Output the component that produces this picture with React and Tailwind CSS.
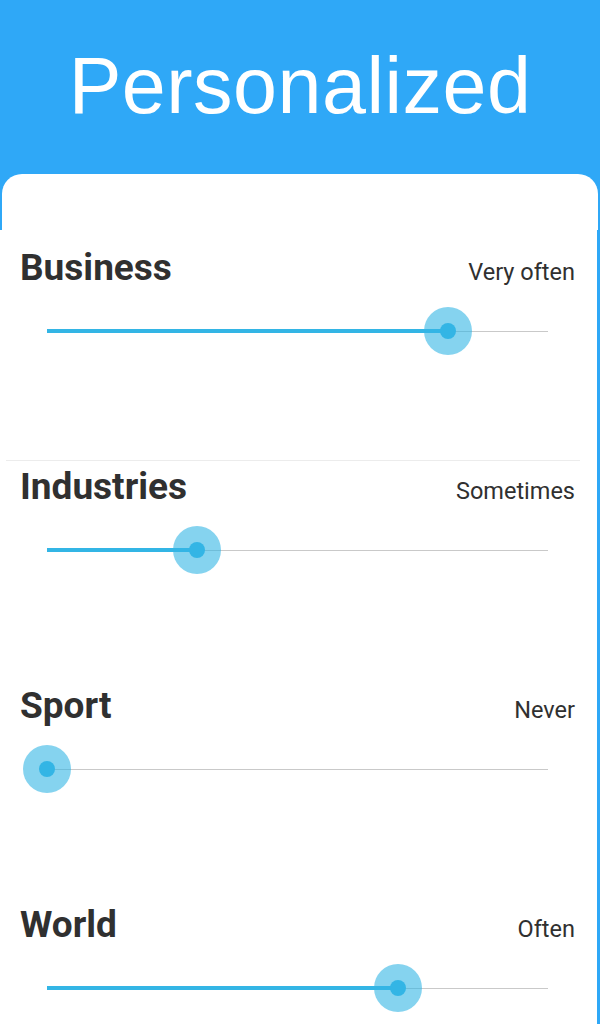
import React from "react";

const rows = [
  { label: "Business", value: "Very often", pct: 0.8, divider: false },
  { label: "Industries", value: "Sometimes", pct: 0.3, divider: true },
  { label: "Sport", value: "Never", pct: 0, divider: false },
  { label: "World", value: "Often", pct: 0.7, divider: false },
];

function Slider({ pct }) {
  return (
    <div className="relative ml-[47px] w-[501px] h-[48px] mt-[21px]">
      <div className="absolute left-0 right-0 top-[24px] h-px bg-[#c9c9c9]" />
      <div
        className="absolute left-0 top-[22px] h-[4px] bg-[#33b5e5]"
        style={{ width: `${pct * 100}%` }}
      />
      <div
        className="absolute top-0 w-[48px] h-[48px] -ml-[24px] rounded-full bg-[#33b5e5]/60 flex items-center justify-center"
        style={{ left: `${pct * 100}%` }}
      >
        <div className="w-[16px] h-[16px] rounded-full bg-[#33b5e5]" />
      </div>
    </div>
  );
}

function Row({ label, value, pct, divider }) {
  return (
    <div className={divider ? "h-[219px] pt-[11px]" : "h-[219px] pt-[20px]"}>
      {divider && <div className="ml-[6px] mr-[17px] h-px bg-[#ececec] mb-[8px]" />}
      <div className="flex items-baseline justify-between pl-[20px] pr-[22px]">
        <span className="text-[37px] leading-[36px] font-bold text-[#303030]">{label}</span>
        <span className="text-[23.5px] leading-none text-[#303030]">{value}</span>
      </div>
      <Slider pct={pct} />
    </div>
  );
}

export default function App() {
  return (
    <div
      className="w-[600px] h-[1024px] overflow-hidden bg-[#2fa8f7]"
      style={{ fontFamily: "Roboto, 'Liberation Sans', sans-serif" }}
    >
      <div className="h-[174px] pt-[46px] flex justify-center">
        <h1
          className="text-[79px] leading-none text-white tracking-[0.5px]"
          style={{ fontFamily: "'Liberation Sans', Arial, sans-serif" }}
        >
          Personalized
        </h1>
      </div>
      <div className="mx-[2px] h-[56px] rounded-t-[20px] bg-white" />
      <div className="mr-[3px] bg-white">
        {rows.map((r) => (
          <Row key={r.label} {...r} />
        ))}
      </div>
    </div>
  );
}
